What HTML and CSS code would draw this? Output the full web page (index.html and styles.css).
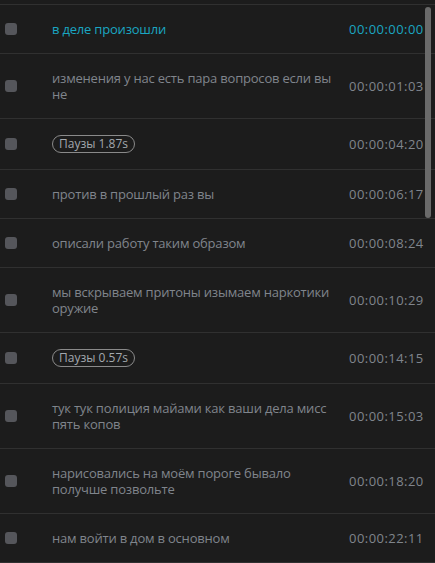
FILE: index.html
```html
<!DOCTYPE html>
<html lang="ru">
<head>
<meta charset="utf-8">
<link rel="stylesheet" href="styles.css">
</head>
<body>
<div class="panel">
  <ul class="list">
    <li class="row active"><span class="check"></span><div class="text">в деле произошли</div><div class="time">00:00:00:00</div></li>
    <li class="row"><span class="check"></span><div class="text">изменения у нас есть пара вопросов если вы не</div><div class="time">00:00:01:03</div></li>
    <li class="row pause"><span class="check"></span><div class="text"><span class="badge">Паузы 1.87s</span></div><div class="time">00:00:04:20</div></li>
    <li class="row"><span class="check"></span><div class="text">против в прошлый раз вы</div><div class="time">00:00:06:17</div></li>
    <li class="row"><span class="check"></span><div class="text">описали работу таким образом</div><div class="time">00:00:08:24</div></li>
    <li class="row"><span class="check"></span><div class="text">мы вскрываем притоны изымаем наркотики оружие</div><div class="time">00:00:10:29</div></li>
    <li class="row pause"><span class="check"></span><div class="text"><span class="badge">Паузы 0.57s</span></div><div class="time">00:00:14:15</div></li>
    <li class="row"><span class="check"></span><div class="text">тук тук полиция майами как ваши дела мисс пять копов</div><div class="time">00:00:15:03</div></li>
    <li class="row"><span class="check"></span><div class="text">нарисовались на моём пороге бывало получше позвольте</div><div class="time">00:00:18:20</div></li>
    <li class="row"><span class="check"></span><div class="text">нам войти в дом в основном</div><div class="time">00:00:22:11</div></li>
  </ul>
  <div class="scrollbar"></div>
</div>
</body>
</html>
```
FILE: styles.css
```css
html, body {
  margin: 0;
  padding: 0;
  background: #1c1c1c;
  height: 100%;
  overflow: hidden;
}
.panel {
  position: relative;
  height: 563px;
  overflow: hidden;
  font-family: "Open Sans", "Noto Sans", sans-serif;
  font-size: 13px;
}
.list {
  list-style: none;
  margin: 4px 0 0;
  padding: 0;
  border-top: 1px solid #303030;
}
.row {
  display: flex;
  align-items: center;
  padding: 16px 0 16px 5px;
  border-bottom: 1px solid #303030;
  color: #80858c;
  line-height: 16px;
}
.check {
  flex: none;
  width: 12px;
  height: 12px;
  border-radius: 3px;
  background: #55565b;
}
.text {
  flex: none;
  width: 292px;
  margin-left: 35px;
  letter-spacing: -0.2px;
}
.time {
  margin-left: 5px;
  white-space: nowrap;
  letter-spacing: 0.45px;
}
.active .text, .active .time {
  color: #1aa6c2;
}
.badge {
  display: inline-block;
  height: 16px;
  line-height: 16px;
  padding: 0 6px;
  border: 1px solid #8a8a8a;
  border-radius: 9px;
  color: #a3a8ae;
  font-size: 12px;
  letter-spacing: 0;
}
.scrollbar {
  position: absolute;
  left: 425px;
  top: 7px;
  width: 6px;
  height: 211px;
  border-radius: 3px;
  background: #6a6a6a;
}
```
